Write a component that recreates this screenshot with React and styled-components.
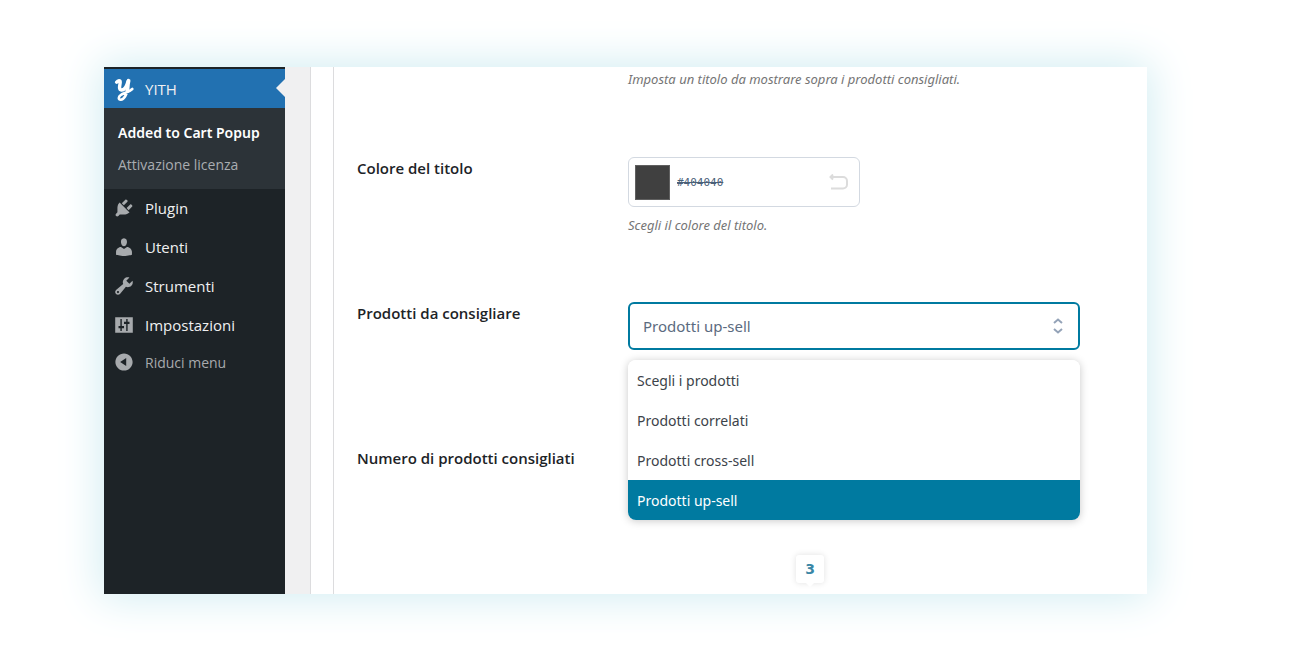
import { useState } from "react";
import styled, { createGlobalStyle } from "styled-components";

const menu = [
  {
    label: "Plugin",
    path: "M13.11 4.36L9.87 7.6 8 5.73l3.24-3.24c.35-.34 1.05-.2 1.56.32.52.51.66 1.21.31 1.55zm-8 1.77l.91-1.12 9.01 9.01-1.19.84c-.71.71-2.63 1.16-3.82 1.16H6.14L4.9 17.26c-.59.59-1.54.59-2.12 0-.59-.58-.59-1.53 0-2.12l1.24-1.24v-3.88c0-1.13.4-3.19 1.09-3.89zm7.26 3.97l3.24-3.24c.34-.35 1.04-.21 1.55.31.52.51.66 1.21.31 1.55l-3.24 3.25z",
  },
  {
    label: "Utenti",
    path: "M10 9.25c-2.27 0-2.73-3.44-2.73-3.44C7 4.02 7.82 2 9.97 2c2.16 0 2.98 2.02 2.71 3.81 0 0-.41 3.44-2.68 3.44zm0 2.57L12.72 10c2.39 0 4.52 2.33 4.52 4.53v2.49s-3.65 1.13-7.24 1.13c-3.65 0-7.24-1.13-7.24-1.13v-2.49c0-2.25 1.94-4.48 4.47-4.48z",
  },
  {
    label: "Strumenti",
    path: "M16.68 9.77c-1.34 1.34-3.3 1.67-4.95.99l-5.41 6.52c-.99.99-2.59.99-3.58 0s-.99-2.59 0-3.57l6.52-5.42c-.68-1.65-.35-3.61.99-4.95 1.28-1.28 3.12-1.62 4.72-1.06l-2.89 2.89 2.82 2.82 2.86-2.87c.53 1.58.18 3.39-1.08 4.65zM3.81 16.21c.4.39 1.04.39 1.43 0 .4-.4.4-1.04 0-1.43-.39-.4-1.03-.4-1.43 0-.39.39-.39 1.03 0 1.43z",
  },
  {
    label: "Impostazioni",
    path: "M18 17V3H2v14h16zM8 11h2v2H8v2.500H6.700V13H5v-2h1.700V4.500H8V11zm5.300-2v6.500H12V9h-2V7h2V4.500h1.300V7H15v2h-1.700z",
  },
];

const options = [
  "Scegli i prodotti",
  "Prodotti correlati",
  "Prodotti cross-sell",
  "Prodotti up-sell",
];

export default function App() {
  const [selected, setSelected] = useState("Prodotti up-sell");
  const [color, setColor] = useState("#404040");

  return (
    <>
      <GlobalStyle />
      <Frame>
        <Sidebar>
          <Current href="#yith">
            <YithLogo />
            YITH
          </Current>
          <SubMenu>
            <SubLink href="#popup" $active>Added to Cart Popup</SubLink>
            <SubLink href="#licenza">Attivazione licenza</SubLink>
          </SubMenu>
          {menu.map((m) => (
            <MenuLink key={m.label} href={`#${m.label}`}>
              <Icon viewBox="0 0 20 20"><path d={m.path} /></Icon>
              {m.label}
            </MenuLink>
          ))}
          <Collapse type="button">
            <Icon viewBox="0 0 20 20">
              <path d="M10 2.16c4.33 0 7.84 3.51 7.84 7.84s-3.51 7.84-7.84 7.84S2.16 14.33 2.16 10 5.67 2.16 10 2.16zm2 11.4V6.44L6.5 10z" />
            </Icon>
            Riduci menu
          </Collapse>
        </Sidebar>

        <Content>
          <Panel>
            <Intro>
              <Description>Imposta un titolo da mostrare sopra i prodotti consigliati.</Description>
            </Intro>

            <Row>
              <Label htmlFor="title-color">Colore del titolo</Label>
              <Field>
                <ColorBox>
                  <Swatch type="button" aria-label="Scegli colore" style={{ background: color }} />
                  <ColorInput
                    id="title-color"
                    value={color}
                    onChange={(e) => setColor(e.target.value)}
                  />
                  <Reset type="button" aria-label="Ripristina" onClick={() => setColor("#404040")}>
                    <svg width="20" height="16" viewBox="0 0 20 16">
                      <path d="M4 .5L1.500 3l2.500 2.500M1.500 3H14a4 4 0 0 1 4 4v3.500a4 4 0 0 1-4 4H2" />
                    </svg>
                  </Reset>
                </ColorBox>
                <Description>Scegli il colore del titolo.</Description>
              </Field>
            </Row>

            <Row>
              <Label htmlFor="products">Prodotti da consigliare</Label>
              <Field>
                <Select id="products" value={selected} onChange={(e) => setSelected(e.target.value)}>
                  {options.map((o) => (
                    <option key={o}>{o}</option>
                  ))}
                </Select>
                <Arrows viewBox="0 0 10 16">
                  <path d="M1 5L5 1.5 9 5M1 11L5 14.5 9 11" />
                </Arrows>
                <Dropdown role="listbox" aria-label="Prodotti da consigliare">
                  {options.map((o) => (
                    <Option
                      key={o}
                      role="option"
                      aria-selected={o === selected}
                      $active={o === selected}
                      onClick={() => setSelected(o)}
                    >
                      {o}
                    </Option>
                  ))}
                </Dropdown>
              </Field>
            </Row>

            <Row>
              <Label as="div">Numero di prodotti consigliati</Label>
              <Field>
                <Bubble>3</Bubble>
              </Field>
            </Row>
          </Panel>
        </Content>
      </Frame>
    </>
  );
}

function YithLogo() {
  return (
    <Logo viewBox="0 0 22 26">
      <path strokeWidth="3.4" d="M3.600 6.200C5 4.300 7.300 3.900 7.200 6.200 7.100 8.800 5.200 13.600 8.400 14c3 .3 5.200-3.500 6.600-8.500" />
      <path strokeWidth="3.8" d="M15.600 4.800C14.800 7.500 14.800 11 14.300 15" />
      <path strokeWidth="2.6" d="M14.300 14c-.5 4.500-3.300 9.500-6.500 9.700-2.800.1-2.500-3 0-4.700 3-2 8-2.500 11.500-6" />
    </Logo>
  );
}

const GlobalStyle = createGlobalStyle`
  * {
    box-sizing: border-box;
  }
  body {
    margin: 0;
    background: #ffffff;
    font-family: "Noto Sans", "Open Sans", sans-serif;
    font-size: 14px;
  }
`;

const Frame = styled.div`
  display: flex;
  margin: 67px 153px 75px 104px;
  box-shadow: 0 0 40px 4px #d2edf2;
`;

const Sidebar = styled.nav`
  flex: 0 0 181px;
  padding-top: 2px;
  background: #1d2327;
`;

const MenuLink = styled.a`
  display: flex;
  align-items: center;
  gap: 10px;
  height: 39px;
  padding: 0 0 2px 9px;
  color: #f0f0f1;
  font-family: "Open Sans", sans-serif;
  font-size: 15px;
  text-decoration: none;
`;

const Current = styled(MenuLink)`
  position: relative;
  padding-bottom: 0;
  background: #2271b1;
  &::after {
    content: "";
    position: absolute;
    right: 0;
    top: 10px;
    border: 9px solid transparent;
    border-left: 0;
    border-right-color: #f0f0f1;
  }
`;

const Collapse = styled(MenuLink).attrs({ as: "button" })`
  height: 36px;
  width: 100%;
  border: 0;
  background: none;
  color: #a7aaad;
  font-size: 14px;
`;

const Icon = styled.svg`
  width: 22px;
  height: 22px;
  fill: #a7aaad;
`;

const Logo = styled.svg`
  width: 22px;
  height: 26px;
  fill: none;
  stroke: #ffffff;
  stroke-linecap: round;
  stroke-linejoin: round;
`;

const SubMenu = styled.div`
  padding: 9px 0 8px;
  background: #2c3338;
`;

const SubLink = styled.a`
  display: block;
  padding-left: 14px;
  line-height: 32px;
  font-family: ${(p) => (p.$active ? '"Noto Sans"' : '"Open Sans"')}, sans-serif;
  font-size: 14px;
  font-weight: ${(p) => (p.$active ? 600 : 400)};
  color: ${(p) => (p.$active ? "#ffffff" : "#a9adb1")};
  text-decoration: none;
`;

const Content = styled.main`
  flex: 1;
  padding-left: 25px;
  background: #f0f0f1;
`;

const Panel = styled.section`
  height: 100%;
  padding: 0 67px 0 23px;
  border-left: 1px solid #dcdcde;
  background: linear-gradient(90deg, #ffffff 22px, #dcdcde 22px, #dcdcde 23px, #ffffff 23px);
`;

const Row = styled.div`
  display: grid;
  grid-template-columns: 248px 1fr;
  gap: 23px;
  min-height: 145px;
  padding-left: 23px;
  &:last-child {
    min-height: 147px;
  }
`;

const Intro = styled.div`
  height: 90px;
  padding: 3px 0 0 294px;
`;

const Label = styled.label`
  color: #1d2327;
  font-family: "Open Sans", sans-serif;
  font-size: 15px;
  font-weight: 600;
  line-height: 22px;
`;

const Field = styled.div`
  position: relative;
`;

const Description = styled.p`
  margin: 0;
  color: #757575;
  font-size: 13px;
  font-style: italic;
  line-height: 18px;
`;

const ColorBox = styled.div`
  display: flex;
  align-items: center;
  width: 232px;
  height: 50px;
  margin-bottom: 9px;
  padding: 0 10px 0 6px;
  border: 1px solid #d3d9e1;
  border-radius: 6px;
`;

const Swatch = styled.button`
  width: 35px;
  height: 35px;
  border: 1px solid #606060;
`;

const ColorInput = styled.input`
  flex: 1;
  min-width: 0;
  border: 0;
  padding: 0 7px;
  outline: 0;
  color: #4a6078;
  font-family: "DejaVu Sans Mono", monospace;
  font-size: 11px;
  text-decoration: line-through;
`;

const Reset = styled.button`
  display: flex;
  padding: 0;
  border: 0;
  background: none;
  svg {
    fill: none;
    stroke: #dcdcdc;
    stroke-width: 2;
  }
`;

const Select = styled.select`
  display: block;
  width: 100%;
  height: 48px;
  padding: 0 13px;
  appearance: none;
  border: 2px solid #007aa0;
  border-radius: 6px;
  background: #ffffff;
  color: #5b6b80;
  font-family: inherit;
  font-size: 15px;
`;

const Arrows = styled.svg`
  position: absolute;
  top: 16px;
  right: 17px;
  width: 10px;
  height: 16px;
  fill: none;
  stroke: #94a3b8;
  stroke-width: 2;
  pointer-events: none;
`;

const Dropdown = styled.ul`
  position: absolute;
  z-index: 2;
  top: 58px;
  left: 0;
  right: 0;
  margin: 0;
  padding: 0;
  overflow: hidden;
  border-radius: 8px;
  background: #ffffff;
  box-shadow: 0 1px 8px rgba(0, 0, 0, 0.22);
  list-style: none;
`;

const Option = styled.li`
  padding: 2px 9px 0;
  line-height: 38px;
  color: ${(p) => (p.$active ? "#ffffff" : "#3c434a")};
  background: ${(p) => (p.$active ? "#007aa0" : "#ffffff")};
`;

const Bubble = styled.output`
  position: absolute;
  top: 108px;
  left: 168px;
  width: 28px;
  border-radius: 3px;
  background: #ffffff;
  box-shadow: 0 0 6px rgba(0, 0, 0, 0.12);
  color: #3b87a6;
  font-family: "DejaVu Sans", sans-serif;
  font-size: 14px;
  font-weight: 700;
  line-height: 28px;
  text-align: center;
  &::after {
    content: "";
    position: absolute;
    top: 28px;
    left: 10px;
    border: 4px solid transparent;
    border-top-color: #ffffff;
    border-bottom: 0;
  }
`;
